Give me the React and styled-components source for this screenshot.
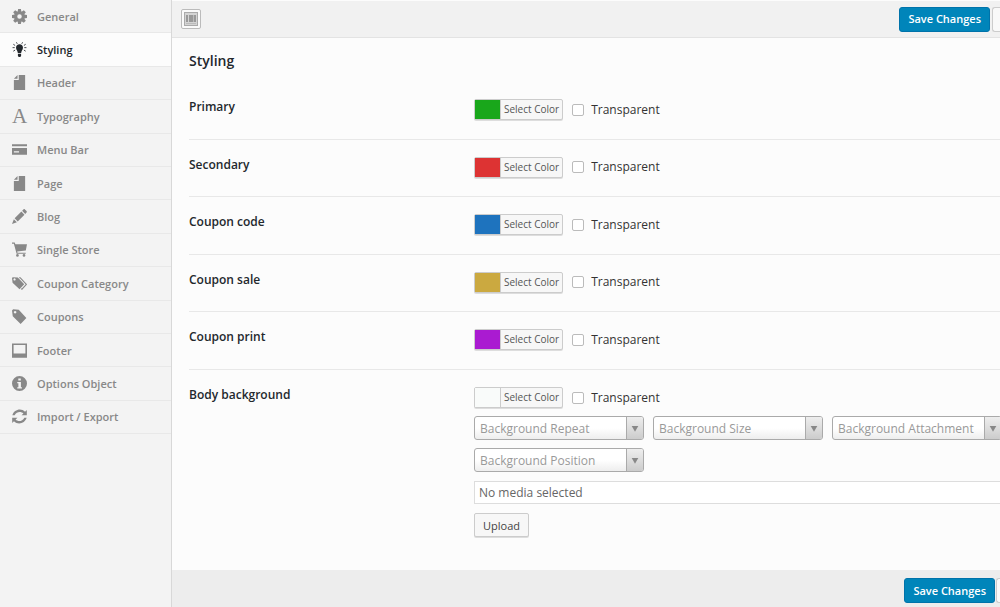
import React, { useState } from 'react';
import styled, { createGlobalStyle } from 'styled-components';

const menu = [
  { name: 'General', icon: 'cog' },
  { name: 'Styling', icon: 'bulb' },
  { name: 'Header', icon: 'file' },
  { name: 'Typography', icon: 'font' },
  { name: 'Menu Bar', icon: 'card' },
  { name: 'Page', icon: 'file' },
  { name: 'Blog', icon: 'pencil' },
  { name: 'Single Store', icon: 'cart' },
  { name: 'Coupon Category', icon: 'tags' },
  { name: 'Coupons', icon: 'tag' },
  { name: 'Footer', icon: 'website' },
  { name: 'Options Object', icon: 'info' },
  { name: 'Import / Export', icon: 'refresh' },
];

const colors = [
  { id: 'primary', label: 'Primary', color: '#19a71b' },
  { id: 'secondary', label: 'Secondary', color: '#dd3333' },
  { id: 'coupon-code', label: 'Coupon code', color: '#1e73be' },
  { id: 'coupon-sale', label: 'Coupon sale', color: '#cba940' },
  { id: 'coupon-print', label: 'Coupon print', color: '#aa1bd1' },
];

const backgrounds = [
  'Background Repeat',
  'Background Size',
  'Background Attachment',
  'Background Position',
];

const teeth = [0, 45, 90, 135, 180, 225, 270, 315];

const shapes = {
  cog: (
    <>
      {teeth.map(a => (
        <path key={a} d="M6.5 0h3l.6 3.400h-4.200z" transform={`rotate(${a} 8 8)`} />
      ))}
      <path fillRule="evenodd" d="M8 2.300a5.700 5.700 0 1 0 0 11.400a5.700 5.700 0 1 0 0-11.400zM8 5.600a2.400 2.400 0 1 1 0 4.800a2.400 2.400 0 1 1 0-4.800z" />
    </>
  ),
  bulb: (
    <>
      <path d="M8 2.4c2.3 0 3.7 1.6 3.7 3.7c0 2.2-1.9 3.2-2 6H6.3c-.1-2.8-2-3.8-2-6C4.3 4 5.7 2.4 8 2.4zM6.3 12.800h3.400v2l-.9 1.200H7.200l-.9-1.200z" />
      <path fill="none" stroke="currentColor" strokeWidth="0.9" d="M4.700 0.300l.9 1.600M11.300 0.300l-.9 1.600M1.400 2.400l1.900 1.300M14.600 2.400l-1.900 1.300M0.600 6h2.300M13.100 6h2.300M1.400 9.800l1.900-1.200M14.600 9.800l-1.900-1.200" />
    </>
  ),
  file: <path d="M7.2 0H14v16H2V5.200h5.200zM5.900 0v3.900H2z" />,
  card: (
    <path fillRule="evenodd" d="M0 2.500h16v2H0zM0 6.500h16v7H0zM2 9.800v1.500h5.500V9.800z" />
  ),
  pencil: (
    <path d="M12.200 0.500c.5-.5 1.100-.5 1.600 0l1.700 1.700c.5.5.5 1.100 0 1.600l-1.400 1.400l-3.300-3.300zM10 2.700L13.300 6L6.100 13.200L2.800 9.900zM2 10.800L5.200 14L0 16z" />
  ),
  cart: (
    <>
      <path d="M0 0.500h2.900l.7 2H16l-1.300 6.600l-9.200 1l.4 1.300h8.700v1.200H4.900L2 1.800H0z" />
      <circle cx="5.800" cy="14.300" r="1.400" />
      <circle cx="12.800" cy="14.300" r="1.400" />
    </>
  ),
  tags: (
    <>
      <path fillRule="evenodd" d="M0 2L.8 1.200L6.200 1.600L13 8.900L8 14.200L.6 7.200zM2.700 2.500a1.200 1.200 0 1 0 .01 0z" />
      <path fill="none" stroke="currentColor" strokeWidth="1.100" d="M7.600 1.900h1.200l6.500 7l-4.700 5.200l-.9-.7" />
    </>
  ),
  tag: (
    <path fillRule="evenodd" d="M0 1.500L1.200.2L7.200.7L15.300 9.500L9.200 15.900L.8 7.800zM3.300 2a1.400 1.400 0 1 0 .01 0z" />
  ),
  website: (
    <path fillRule="evenodd" d="M0 .5h16v15.300H0zM1.700 2.200v9h12.600v-9z" />
  ),
  info: (
    <path fillRule="evenodd" d="M8 0a8 8 0 1 0 0 16a8 8 0 1 0 0-16zM6.700 2.600h2.700v2.300H6.700zM5.600 6.300h3.900v5.600h1.100v1.300H5.600v-1.300h1.200V7.600H5.600z" />
  ),
  refresh: (
    <>
      <path d="M15.800 1v5.600h-5.600l2-1.900C9.500 2.200 5 2.500 2.800 6.700H.4C2 .9 9.300-1.600 13.900 2.900z" />
      <path d="M.2 15V9.400h5.600l-2 1.900c2.700 2.500 7.200 2.200 9.400-2h2.400c-1.600 5.800-8.900 8.300-13.500 3.800z" />
    </>
  ),
};

const MenuIcon = ({ name }) => {
  if (name === 'font') {
    return <LetterIcon aria-hidden="true">A</LetterIcon>;
  }
  return (
    <Icon viewBox="0 0 16 16" aria-hidden="true">
      {shapes[name]}
    </Icon>
  );
};

const ColorField = ({ id, color }) => (
  <ColorControls>
    <ColorButton type="button" id={id}>
      <Swatch $color={color} />
      <ColorText>Select Color</ColorText>
    </ColorButton>
    <CheckLabel>
      <Checkbox type="checkbox" />
      Transparent
    </CheckLabel>
  </ColorControls>
);

const App = () => {
  const [active, setActive] = useState('Styling');

  return (
    <Page>
      <GlobalStyle />
      <Sidebar>
        <Menu>
          {menu.map(item => (
            <MenuItem key={item.name}>
              <MenuLink
                href="#"
                $active={item.name === active}
                onClick={() => setActive(item.name)}
              >
                <MenuIcon name={item.icon} />
                {item.name}
              </MenuLink>
            </MenuItem>
          ))}
        </Menu>
      </Sidebar>
      <Main>
        <TopBar>
          <ExpandButton type="button" aria-label="Expand options">
            <ExpandIcon viewBox="0 0 14 14" aria-hidden="true">
              <rect x="0.5" y="0.5" width="13" height="13" fill="#d4d4d4" stroke="#aaa" />
              <path fill="#999" d="M2 3h2v7H2zM5 3h7v7H5z" />
              <path fill="#bbb" d="M9 3h1v7H9zM2 11h10v1H2z" />
            </ExpandIcon>
          </ExpandButton>
          <Actions>
            <SaveButton type="button">Save Changes</SaveButton>
            <EdgeButton type="button" aria-label="Reset Section" $width="8px" />
          </Actions>
        </TopBar>
        <Content>
          <Title>Styling</Title>
          <ColorRows>
            {colors.map(item => (
              <Row key={item.id}>
                <Label htmlFor={item.id}>{item.label}</Label>
                <ColorField id={item.id} color={item.color} />
              </Row>
            ))}
          </ColorRows>
          <LastRow>
            <Label htmlFor="body-background">Body background</Label>
            <Fields>
              <ColorField id="body-background" color="#f9fbfa" />
              <Selects>
                {backgrounds.map(name => (
                  <SelectBox key={name}>
                    <Select aria-label={name}>
                      <option>{name}</option>
                    </Select>
                    <Arrow viewBox="0 0 17 22" aria-hidden="true">
                      <path d="M5 9h7l-3.500 6z" />
                    </Arrow>
                  </SelectBox>
                ))}
              </Selects>
              <MediaInput aria-label="Media" placeholder="No media selected" readOnly />
              <UploadButton type="button">Upload</UploadButton>
            </Fields>
          </LastRow>
        </Content>
        <BottomBar>
          <SaveButton type="button">Save Changes</SaveButton>
          <EdgeButton type="button" aria-label="Reset Section" $width="4px" />
        </BottomBar>
      </Main>
    </Page>
  );
};

export default App;

const GlobalStyle = createGlobalStyle`
  * {
    box-sizing: border-box;
  }

  body {
    margin: 0;
    background: #fcfcfc;
    overflow-x: hidden;
  }

  body, button, input, select {
    font-family: 'Open Sans', 'Noto Sans', sans-serif;
  }
`;

const Page = styled.div`
  display: flex;
  min-height: 100vh;
  overflow: hidden;
  color: #333;
`;

const Sidebar = styled.nav`
  flex: 0 0 172px;
  background: #f3f3f3;
  border-right: 1px solid #d8d8d8;
`;

const Menu = styled.ul`
  display: flex;
  flex-direction: column;
  height: 434px;
  margin: 0;
  padding: 0;
  list-style: none;
`;

const MenuItem = styled.li`
  display: flex;
  flex: 1;
  border-bottom: 1px solid #e8e8e8;
`;

const MenuLink = styled.a`
  display: flex;
  flex: 1;
  align-items: center;
  gap: 10px;
  padding-left: 12px;
  font-size: 11px;
  font-weight: 600;
  text-decoration: none;
  color: ${props => (props.$active ? '#23282d' : '#888')};
  background: ${props => (props.$active ? '#fcfcfc' : 'transparent')};
`;

const Icon = styled.svg`
  width: 15px;
  height: 15px;
  fill: currentColor;
`;

const LetterIcon = styled.span`
  width: 15px;
  font-family: 'Liberation Serif', serif;
  font-size: 21px;
  font-weight: 400;
  line-height: 20px;
`;

const Main = styled.main`
  display: flex;
  flex: 1;
  flex-direction: column;
  min-width: 0;
`;

const TopBar = styled.header`
  display: flex;
  align-items: center;
  justify-content: space-between;
  height: 38px;
  padding-left: 9px;
  background: #f1f1f1;
  border-top: 1px solid #fcfcfc;
  border-bottom: 1px solid #e3e3e3;
`;

const Actions = styled.div`
  display: flex;
  gap: 2px;
`;

const ExpandButton = styled.button`
  display: flex;
  align-items: center;
  justify-content: center;
  width: 20px;
  height: 20px;
  padding: 0;
  background: #fafafa;
  border: 1px solid #bbb;
  border-radius: 2px;
`;

const ExpandIcon = styled.svg`
  width: 14px;
  height: 14px;
`;

const SaveButton = styled.button`
  height: 25px;
  padding: 0 8px;
  font-size: 11px;
  font-weight: 600;
  line-height: 22px;
  color: #fff;
  white-space: nowrap;
  background: #0085ba;
  border: 1px solid #0073aa;
  border-radius: 3px;
`;

const EdgeButton = styled.button`
  width: ${props => props.$width};
  height: 25px;
  padding: 0;
  background: #f9f9f9;
  border: 1px solid #ccc;
  border-right: none;
  border-radius: 3px 0 0 3px;
`;

const Content = styled.div`
  flex: 1;
  padding-left: 17px;
`;

const Title = styled.h2`
  margin: 0;
  padding-top: 13px;
  height: 44px;
  font-size: 14px;
  font-weight: 600;
  line-height: 20px;
  color: #23282d;
`;

const ColorRows = styled.div`
  display: grid;
  grid-auto-rows: 1fr;
  height: 288px;
`;

const Row = styled.div`
  display: grid;
  grid-template-columns: 285px 1fr;
  align-items: start;
  padding-top: 17px;
  border-bottom: 1px solid #e8e8e8;
`;

const LastRow = styled(Row)`
  border-bottom: none;
`;

const Label = styled.label`
  font-size: 12px;
  font-weight: 600;
  line-height: 16px;
  color: #23282d;
`;

const ColorControls = styled.div`
  display: flex;
  align-items: center;
  gap: 9px;
`;

const ColorButton = styled.button`
  display: flex;
  height: 21px;
  padding: 0;
  background: #f7f7f7;
  border: 1px solid #ccc;
  border-radius: 2px;
  box-shadow: 0 1px 0 #ddd;
`;

const Swatch = styled.span`
  width: 25px;
  height: 19px;
  background: ${props => props.$color};
`;

const ColorText = styled.span`
  padding: 0 3px;
  font-size: 10px;
  line-height: 19px;
  color: #555;
  border-left: 1px solid #ccc;
`;

const CheckLabel = styled.label`
  display: flex;
  align-items: center;
  gap: 7px;
  font-size: 12px;
  line-height: 18px;
`;

const Checkbox = styled.input`
  appearance: none;
  width: 12px;
  height: 12px;
  margin: 0;
  background: #fff;
  border: 1px solid #bbb;
  border-radius: 2px;
`;

const Fields = styled.div`
  min-width: 0;
`;

const Selects = styled.div`
  display: grid;
  grid-template-columns: repeat(3, 170px);
  gap: 8px 9px;
  margin-top: 8px;
`;

const SelectBox = styled.div`
  position: relative;
`;

const Select = styled.select`
  display: block;
  appearance: none;
  width: 100%;
  height: 24px;
  padding: 0 5px;
  font-size: 12px;
  color: #999;
  background: linear-gradient(#fff 50%, #eee);
  border: 1px solid #aaa;
  border-radius: 3px;
`;

const Arrow = styled.svg`
  position: absolute;
  top: 1px;
  right: 1px;
  width: 17px;
  height: 22px;
  fill: #888;
  background: linear-gradient(#eee, #ccc);
  border-left: 1px solid #aaa;
  border-radius: 0 2px 2px 0;
  pointer-events: none;
`;

const MediaInput = styled.input`
  display: block;
  width: 100%;
  height: 23px;
  margin: 9px 0;
  padding: 0 4px;
  font-size: 12px;
  background: #fff;
  border: 1px solid #ddd;
  border-right: none;

  &::placeholder {
    color: #666;
    opacity: 1;
  }
`;

const UploadButton = styled.button`
  display: block;
  height: 24px;
  padding: 0 8px;
  font-size: 11px;
  color: #444;
  background: #f7f7f7;
  border: 1px solid #ccc;
  border-radius: 2px;
  box-shadow: 0 1px 0 #ddd;
`;

const BottomBar = styled.footer`
  display: flex;
  gap: 1px;
  justify-content: flex-end;
  height: 37px;
  padding-top: 8px;
  background: #ededed;
`;
